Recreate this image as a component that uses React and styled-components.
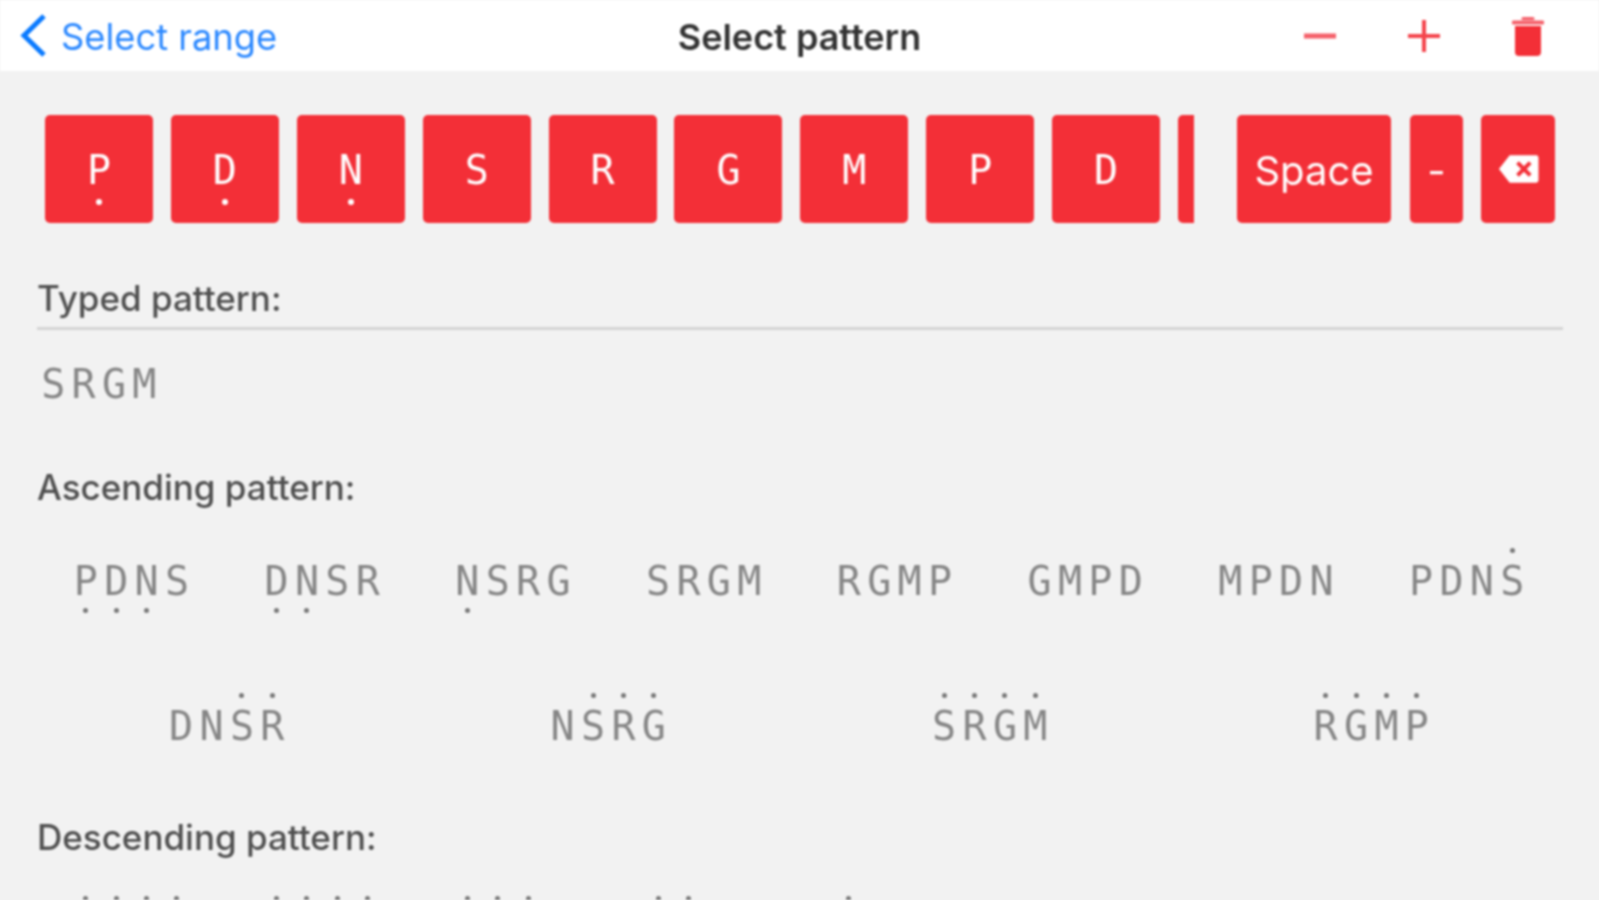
import React from 'react';
import styled, { createGlobalStyle } from 'styled-components';

const RED = '#f32f37';

const GlobalStyle = createGlobalStyle`
  html, body {
    margin: 0;
    height: 100%;
    overflow: hidden;
    background: #f2f2f2;
  }
`;

// The reference is a soft upscaled capture, so the whole page gets a slight blur
const Page = styled.div`
  width: 1599px;
  height: 900px;
  overflow: hidden;
  background: #f2f2f2;
  font-family: Inter, "Liberation Sans", sans-serif;
  filter: blur(0.9px);
`;

const NavBar = styled.header`
  position: relative;
  height: 71px;
  background: #fff;
  display: flex;
  align-items: center;
  justify-content: space-between;
  padding: 0 55px 0 20px;
`;

const BackLink = styled.div`
  display: flex;
  align-items: center;
  gap: 14px;
  color: #2b88ff;
  font-size: 36.3px;
`;

const BackLabel = styled.span`
  padding-top: 3px;
`;

const Title = styled.div`
  position: absolute;
  left: 0;
  right: 0;
  padding-top: 2px;
  text-align: center;
  font-size: 36px;
  font-weight: 600;
  color: #333;
`;

const NavActions = styled.div`
  display: flex;
  align-items: center;
  gap: 72px;
`;

const KeyRow = styled.div`
  display: flex;
  padding: 44px 0 0 45px;
`;

const KeyScroller = styled.div`
  width: 1149px;
  margin-right: 43px;
  overflow: hidden;
  display: flex;
  gap: 17.9px;
`;

const Key = styled.div`
  position: relative;
  flex: none;
  width: ${(p) => p.$width || 108}px;
  height: 108px;
  margin-right: ${(p) => p.$after || 0}px;
  border-radius: 5px;
  background: ${RED};
  color: #fff;
  display: flex;
  align-items: center;
  justify-content: center;
  font-family: ${(p) => (p.$sans ? 'Inter, sans-serif' : '"DejaVu Sans Mono", monospace')};
  font-size: 40px;
`;

const KeyLabel = styled.span`
  padding-top: 2px;
`;

const KeyDot = styled.span`
  position: absolute;
  left: 50%;
  top: 84px;
  width: 6px;
  height: 6px;
  margin-left: -3px;
  border-radius: 50%;
  background: #fff;
`;

const Content = styled.main`
  padding: 0 36px 0 37px;
`;

const SectionLabel = styled.div`
  margin-top: ${(p) => p.$top}px;
  height: 40px;
  line-height: 40px;
  font-size: 35px;
  font-weight: 500;
  color: #505050;
`;

const Divider = styled.div`
  height: 3px;
  margin-top: 9px;
  background: #d4d4d4;
`;

const TypedValue = styled.div`
  display: flex;
  margin-top: 32px;
  padding-left: 1px;
`;

const PatternRow = styled.div`
  display: grid;
  grid-template-columns: repeat(${(p) => p.$cols}, 1fr);
  justify-items: center;
  margin-top: ${(p) => p.$top}px;
`;

const Pattern = styled.div`
  display: flex;
  padding-right: 2px;
`;

const Note = styled.span`
  position: relative;
  width: 30.4px;
  height: 44px;
  line-height: 44px;
  text-align: center;
  font-family: "DejaVu Sans Mono", monospace;
  font-size: 40px;
  color: #868686;
`;

const NoteDot = styled.span`
  position: absolute;
  left: 50%;
  margin-left: -2.5px;
  width: 5px;
  height: 5px;
  border-radius: 50%;
  background: #777;
  ${(p) => (p.$high ? 'top: -11px;' : 'bottom: -10px;')}
`;

function Notes({ text, low = 0, high = 0, highFrom = 0 }) {
  return (
    <Pattern>
      {text.split('').map((letter, i) => (
        <Note key={i}>
          {letter}
          {i < low && <NoteDot />}
          {i >= highFrom && i < highFrom + high && <NoteDot $high />}
        </Note>
      ))}
    </Pattern>
  );
}

// the tenth key is scrolled almost out of view, its letter is not visible
const keys = [
  ['P', true], ['D', true], ['N', true], ['S'], ['R'], ['G'], ['M'], ['P'], ['D'], [''],
];

const ascendingTop = [
  { text: 'PDNS', low: 3 },
  { text: 'DNSR', low: 2 },
  { text: 'NSRG', low: 1 },
  { text: 'SRGM' },
  { text: 'RGMP' },
  { text: 'GMPD' },
  { text: 'MPDN' },
  { text: 'PDNS', high: 1, highFrom: 3 },
];

const ascendingBottom = [
  { text: 'DNSR', high: 2, highFrom: 2 },
  { text: 'NSRG', high: 3, highFrom: 1 },
  { text: 'SRGM', high: 4 },
  { text: 'RGMP', high: 4 },
];

// only the dots of this row reach into the window, the letters sit below the fold
const descendingTop = [4, 4, 3, 2, 1, 0, 0, 0].map((high) => ({ text: '    ', high }));

function BackspaceIcon() {
  return (
    <svg width="41" height="30" viewBox="0 0 42 30">
      <path d="M12 1h27a2.500 2.500 0 0 1 2.500 2.500v23A2.500 2.500 0 0 1 39 29H12L1 15z" fill="#fff" />
      <path d="M20 8.500l13 13M33 8.500l-13 13" stroke={RED} strokeWidth="4" />
    </svg>
  );
}

export default function App() {
  return (
    <Page>
      <GlobalStyle />
      <NavBar>
        <BackLink>
          <svg width="27" height="45" viewBox="0 0 27 45">
            <path d="M24 3L4 22.500 24 42" fill="none" stroke="#0a7aff" strokeWidth="5" />
          </svg>
          <BackLabel>Select range</BackLabel>
        </BackLink>
        <Title>Select pattern</Title>
        <NavActions>
          <svg width="32" height="32" viewBox="0 0 32 32">
            <rect x="0" y="13.500" width="32" height="5" fill="#f5606a" />
          </svg>
          <svg width="32" height="32" viewBox="0 0 32 32">
            <path d="M0 16h32M16 0v32" stroke="#f4454c" strokeWidth="4" />
          </svg>
          <svg width="32" height="40" viewBox="0 0 32 40">
            <path d="M11 2.500h10" stroke="#f5606a" strokeWidth="3" strokeLinecap="round" />
            <path d="M1.500 6.500h29" stroke="#f5606a" strokeWidth="4" strokeLinecap="round" />
            <path d="M3 10h26v26a4 4 0 0 1-4 4H7a4 4 0 0 1-4-4z" fill={RED} />
          </svg>
        </NavActions>
      </NavBar>

      <KeyRow>
        <KeyScroller>
          {keys.map(([letter, dotted], i) => (
            <Key key={i}>
              <KeyLabel>{letter}</KeyLabel>
              {dotted && <KeyDot />}
            </Key>
          ))}
        </KeyScroller>
        <Key $width={154} $after={19} $sans><KeyLabel>Space</KeyLabel></Key>
        <Key $width={53} $after={18} $sans><KeyLabel>-</KeyLabel></Key>
        <Key $width={74}><BackspaceIcon /></Key>
      </KeyRow>

      <Content>
        <SectionLabel $top={55}>Typed pattern:</SectionLabel>
        <Divider />
        <TypedValue><Notes text="SRGM" /></TypedValue>
        <SectionLabel $top={61}>Ascending pattern:</SectionLabel>
        <PatternRow $cols={8} $top={52}>
          {ascendingTop.map((p, i) => <Notes key={i} {...p} />)}
        </PatternRow>
        <PatternRow $cols={4} $top={101}>
          {ascendingBottom.map((p, i) => <Notes key={i} {...p} />)}
        </PatternRow>
        <SectionLabel $top={69}>Descending pattern:</SectionLabel>
        <PatternRow $cols={8} $top={50}>
          {descendingTop.map((p, i) => <Notes key={i} {...p} />)}
        </PatternRow>
      </Content>
    </Page>
  );
}
